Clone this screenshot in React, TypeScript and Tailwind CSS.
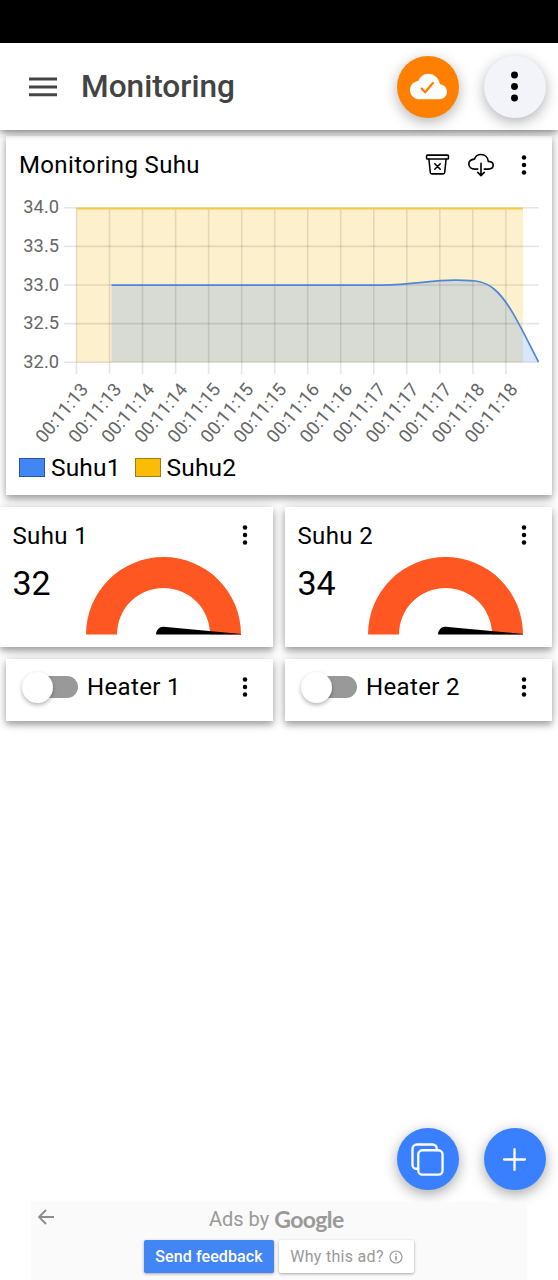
import React from "react";
import { IoAdd, IoCloudDone, IoCloudDownloadOutline, IoCopyOutline, IoEllipsisVertical, IoTrashBinOutline } from "react-icons/io5";

const ticks = [
  "00:11:13", "00:11:13", "00:11:14", "00:11:14", "00:11:15", "00:11:15", "00:11:15",
  "00:11:16", "00:11:16", "00:11:17", "00:11:17", "00:11:17", "00:11:18", "00:11:18",
];
const levels = ["34.0", "33.5", "33.0", "32.5", "32.0"];
const cardShadow = "shadow-[0_4px_6px_rgba(0,0,0,0.28),0_1px_12px_rgba(0,0,0,0.18)]";
const curve = "M105.5 83.2H376C408 82.7 424 78.4 449 78.2C471 78.1 479 79.5 488 87C503 99 516 128 532.5 160";

function TemperatureChart() {
  return (
    <svg className="block h-[260px] w-full overflow-visible" viewBox="0 0 546 260" fontFamily="Roboto, sans-serif">
      <rect x="70.5" y="6.5" width="446.5" height="154" fill="#fdf0cc" />
      <path d={curve + "H105.5Z"} fill="#4285f4" fillOpacity="0.2" />
      <g stroke="#000" strokeOpacity="0.1" strokeWidth="1.6">
        {levels.map((level, i) => (
          <path key={level} d={`M58 ${5.8 + i * 38.6}H533`} />
        ))}
        {ticks.map((_, i) => (
          <path key={i} d={`M${70.5 + i * 33.03} 6V172`} />
        ))}
      </g>
      <path d="M70.5 6.5H517" stroke="#f6c945" strokeWidth="1.8" />
      <path d={curve} fill="none" stroke="#4f86d8" strokeWidth="1.7" />
      <g fill="#666" fontSize="18.3">
        {levels.map((level, i) => (
          <text key={level} x="53" y={11.4 + i * 38.6} textAnchor="end">{level}</text>
        ))}
        {ticks.map((time, i) => (
          <text key={i} transform={`translate(${78.4 + i * 33.03} 183.8) rotate(-50)`} textAnchor="end" dy="6.3">{time}</text>
        ))}
      </g>
    </svg>
  );
}

function Gauge() {
  return (
    <svg className="h-[78px] w-[156px]" viewBox="0 0 156 78">
      <path d="M0 77.5A77.5 77.5 0 0 1 155 77.5H124A46.5 46.5 0 0 0 31 77.5Z" fill="#ff5722" />
      <path d="M70 77.5C70 73 73.5 69.5 77.5 69.7L155 77V77.5Z" fill="#000" />
    </svg>
  );
}

function GaugeCard({ title, value, className, gaugeClass }: { title: string; value: string; className: string; gaugeClass: string }) {
  return (
    <section className={`h-[140px] bg-white ${cardShadow} ${className}`}>
      <div className="flex h-[50px] items-end justify-between pb-[6px] pt-2 text-black">
        <h2 className="text-[24px] leading-[30px] tracking-[0.35px]">{title}</h2>
        <IoEllipsisVertical className="mb-[4px] mr-[16px] size-6" />
      </div>
      <div className="flex justify-between">
        <span className="pt-[6px] text-[34px] leading-[40px]">{value}</span>
        <div className={gaugeClass}><Gauge /></div>
      </div>
    </section>
  );
}

function HeaterCard({ title, className }: { title: string; className: string }) {
  return (
    <section className={`flex h-[62px] items-center bg-white pb-[6px] pr-4 ${cardShadow} ${className}`}>
      <button className="flex h-8 w-[56px] items-center" aria-label={title}>
        <span className="z-10 size-[31px] shrink-0 rounded-full bg-white shadow-[0_2px_4px_rgba(0,0,0,0.3)]" />
        <span className="-ml-[16px] h-[22px] w-[41px] rounded-full bg-[#999]" />
      </button>
      <h2 className="ml-[9px] flex-1 text-[24px] leading-[30px] tracking-[0.35px]">{title}</h2>
      <IoEllipsisVertical className="size-6" />
    </section>
  );
}

export default function App() {
  return (
    <div className="flex h-[1280px] w-[558px] flex-col overflow-hidden bg-white font-['Roboto',sans-serif] text-black">
      <div className="h-[43px] shrink-0 bg-black" />
      <header className="z-10 flex h-[87px] shrink-0 items-center bg-white pl-[29px] pr-[12px] shadow-[0_2px_8px_rgba(0,0,0,0.55)]">
        <svg className="h-[20px] w-[28px]" viewBox="0 0 28 20" stroke="#454545" strokeWidth="3">
          <path d="M0 1.9H28M0 9.9H28M0 17.8H28" />
        </svg>
        <h1 className="ml-[24px] flex-1 text-[31.6px] font-medium leading-10 text-[#434343]">Monitoring</h1>
        <button className="flex size-[62px] items-center justify-center rounded-full bg-[#ff8000] text-white shadow-[0_4px_14px_rgba(0,0,0,0.3)]">
          <IoCloudDone className="size-[37px]" />
        </button>
        <button className="ml-[25px] flex size-[62px] items-center justify-center rounded-full bg-[#f3f4f9] pr-px text-black shadow-[0_4px_14px_rgba(0,0,0,0.3)]">
          <IoEllipsisVertical className="size-[37px]" />
        </button>
      </header>

      <main className="flex flex-1 flex-col">
        <section className={`ml-[6px] mt-[6px] flex h-[359px] w-[546px] flex-col bg-white ${cardShadow}`}>
          <div className="flex h-[66px] items-center pb-[9px] pl-[13px] pr-4">
            <h2 className="flex-1 text-[24px] leading-[30px] tracking-[0.35px]">Monitoring Suhu</h2>
            <IoTrashBinOutline className="size-[25px]" />
            <IoCloudDownloadOutline className="ml-[18px] size-[26px]" />
            <IoEllipsisVertical className="ml-[18px] size-6" />
          </div>
          <TemperatureChart />
          <div className="-mt-[10px] flex items-center pl-[13px] text-[24.5px] leading-[30px] tracking-[0.15px]">
            <span className="h-[19px] w-[26px] border border-[#2b559c] bg-[#4285f4]" />
            <span className="ml-[6px] pt-px">Suhu1</span>
            <span className="ml-[14px] h-[19px] w-[26px] border border-[#9c7a16] bg-[#fbbc05]" />
            <span className="ml-[6px] pt-px">Suhu2</span>
          </div>
        </section>
        <div className="mt-3 flex">
          <GaugeCard title="Suhu 1" value="32" className="w-[273px] pl-[12.5px]" gaugeClass="mr-[31px]" />
          <GaugeCard title="Suhu 2" value="34" className="ml-3 w-[267px] pl-[12.5px]" gaugeClass="mr-[28px]" />
        </div>
        <div className="mt-3 flex pl-[6px]">
          <HeaterCard title="Heater 1" className="w-[267px] pl-[16px]" />
          <HeaterCard title="Heater 2" className="ml-3 w-[267px] pl-[16px]" />
        </div>
        <div className="mb-[12px] mr-[12px] mt-auto flex justify-end gap-[25px] text-white">
          <button className="flex size-[62px] items-center justify-center rounded-full bg-[#3880ff] pr-px shadow-[0_4px_14px_rgba(0,0,0,0.35)]">
            <IoCopyOutline className="size-[37px]" />
          </button>
          <button className="flex size-[62px] items-center justify-center rounded-full bg-[#3880ff] pr-px shadow-[0_4px_14px_rgba(0,0,0,0.35)]">
            <IoAdd className="size-[37px]" />
          </button>
        </div>
      </main>

      <footer className="z-10 ml-[31px] flex h-[78px] w-[496px] shrink-0 flex-col bg-[#fafafa]">
        <div className="flex h-[34px] items-center text-[#999]">
          <svg className="mb-[4px] ml-[7px] size-[16px]" viewBox="0 0 16 16" fill="none" stroke="#8c8c8c" strokeWidth="1.9">
            <path d="M16 8H1.5M8 1L1 8L8 15" />
          </svg>
          <span className="ml-[155px] text-[20px] leading-[30px]">Ads by</span>
          <span className="ml-[5px] font-['Lato',sans-serif] text-[23px] font-bold leading-[28px] tracking-[-0.6px]">Google</span>
        </div>
        <div className="ml-[113px] mt-[4px] flex gap-[5px] text-[16px] tracking-[0.3px]">
          <button className="flex h-[33px] w-[130px] items-center justify-center rounded-[2px] bg-[#4285f4] font-medium tracking-[0.1px] text-white shadow-[0_1px_3px_rgba(0,0,0,0.35)]">Send feedback</button>
          <button className="flex h-[33px] w-[135px] items-center justify-center rounded-[2px] bg-white text-[#999] shadow-[0_1px_3px_rgba(0,0,0,0.35)]">
            Why this ad?
            <svg className="ml-[5px] size-[14px]" viewBox="0 0 14 14" fill="none" stroke="#999" strokeWidth="1.2">
              <circle cx="7" cy="7" r="6" />
              <path d="M7 6V10.5M7 3.5V5" strokeWidth="1.6" />
            </svg>
          </button>
        </div>
      </footer>
    </div>
  );
}
